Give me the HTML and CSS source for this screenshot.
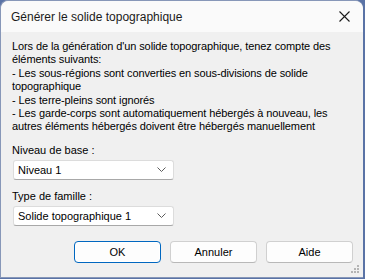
FILE: index.html
```html
<!DOCTYPE html>
<html lang="fr">
<head>
  <meta charset="UTF-8" />
  <meta name="viewport" content="width=device-width, initial-scale=1.0" />
  <title>Générer le solide topographique</title>
  <link rel="stylesheet" href="styles.css">
</head>
<body>
  <div class="dialog">
    <div class="titlebar">
      <span class="title">Générer le solide topographique</span>
      <button class="close" aria-label="Fermer">
        <svg width="11" height="11" viewBox="0 0 11 11"><path d="M0.5 0.5 L10.5 10.5 M10.5 0.5 L0.5 10.5" stroke="#1a1a1a" stroke-width="1.1" fill="none"/></svg>
      </button>
    </div>

    <div class="content">
      <p class="info">
        Lors de la génération d'un solide topographique, tenez compte des<br>
        éléments suivants:<br>
        - Les sous-régions sont converties en sous-divisions de solide<br>
        topographique<br>
        - Les terre-pleins sont ignorés<br>
        - Les garde-corps sont automatiquement hébergés à nouveau, les<br>
        autres éléments hébergés doivent être hébergés manuellement
      </p>

      <div class="field">
        <label>Niveau de base :</label>
        <div class="combo">
          <span>Niveau 1</span>
          <svg width="9" height="5" viewBox="0 0 9 5"><path d="M0.5 0.5 L4.5 4.5 L8.5 0.5" stroke="#5c5c5c" stroke-width="1" fill="none"/></svg>
        </div>
      </div>

      <div class="field">
        <label>Type de famille :</label>
        <div class="combo">
          <span>Solide topographique 1</span>
          <svg width="9" height="5" viewBox="0 0 9 5"><path d="M0.5 0.5 L4.5 4.5 L8.5 0.5" stroke="#5c5c5c" stroke-width="1" fill="none"/></svg>
        </div>
      </div>
    </div>

    <div class="buttons">
      <button class="btn default">OK</button>
      <button class="btn">Annuler</button>
      <button class="btn">Aide</button>
    </div>

    <svg class="grip" width="9" height="9" viewBox="0 0 9 9">
      <g fill="#b4b4b4">
        <rect x="6" y="0" width="2" height="2"/>
        <rect x="3" y="3" width="2" height="2"/><rect x="6" y="3" width="2" height="2"/>
        <rect x="0" y="6" width="2" height="2"/><rect x="3" y="6" width="2" height="2"/><rect x="6" y="6" width="2" height="2"/>
      </g>
    </svg>
  </div>
</body>
</html>
```

FILE: styles.css
```css
body { margin: 0; background: #5a73a6; font-family: "Liberation Sans", Arial, sans-serif; color: #000; overflow: hidden; }
.dialog { position: relative; width: 362px; height: 276px; background: #f0f0f0; border: 1px solid #8797b8; border-right: none; border-radius: 8px 8px 0 0; box-sizing: content-box; }
.titlebar { height: 31px; background: #fafafa; border-radius: 8px 8px 0 0; display: flex; align-items: center; justify-content: space-between; padding: 0 0 0 10px; }
.title { font-size: 12px; color: #1a1a1a; }
.close { border: none; background: none; padding: 0; width: 30px; height: 30px; display: flex; align-items: center; justify-content: center; margin-right: 4px; }
.content { padding: 8px 11px 0 11px; }
.info { margin: 0; font-size: 11px; line-height: 13.4px; letter-spacing: -0.1px; }
.field { margin-top: 10px; }
label { display: block; font-size: 11px; line-height: 13px; margin-bottom: 3px; }
.combo { width: 161px; height: 20px; box-sizing: border-box; margin-left: 1px; background: #fff; border: 1px solid #dcdcdc; border-bottom-color: #a8a8a8; border-radius: 3px; display: flex; align-items: center; justify-content: space-between; padding: 0 7px 0 4px; font-size: 11px; }
.buttons { display: flex; justify-content: flex-end; gap: 9px; padding: 15px 10px 0 0; }
.btn { width: 87px; height: 22px; font-family: "Liberation Sans", Arial, sans-serif; font-size: 11px; background: #fdfdfd; border: 1px solid #d0d0d0; border-bottom-color: #b8b8b8; border-radius: 4px; padding: 0; color: #000; }
.btn.default { border: 1px solid #0067c0; box-shadow: inset 0 0 0 1px #ffffff; }
.grip { position: absolute; right: 3px; bottom: 3px; }
```
